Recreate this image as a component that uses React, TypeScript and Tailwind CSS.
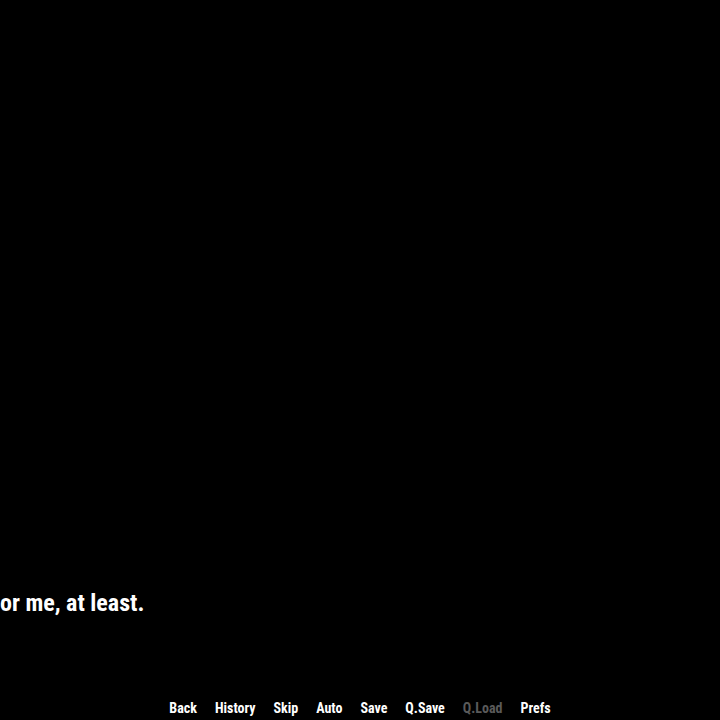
import React from "react";

const quickItems = [
  { label: "Back", enabled: true },
  { label: "History", enabled: true },
  { label: "Skip", enabled: true },
  { label: "Auto", enabled: true },
  { label: "Save", enabled: true },
  { label: "Q.Save", enabled: true },
  { label: "Q.Load", enabled: false },
  { label: "Prefs", enabled: true },
];

function QuickMenu() {
  return (
    <div className="flex justify-center items-end gap-[18px] pb-[3px]">
      {quickItems.map((item) => (
        <button
          key={item.label}
          className={
            item.enabled
              ? "text-[14px] leading-[18px] font-bold text-white"
              : "text-[14px] leading-[18px] font-bold text-[#5a5a5a]"
          }
        >
          {item.label}
        </button>
      ))}
    </div>
  );
}

export default function App() {
  return (
    <div
      className="w-[720px] h-[720px] bg-black overflow-hidden flex flex-col font-stretch-condensed"
      style={{ fontFamily: 'Roboto, "Roboto Condensed", sans-serif' }}
    >
      <div className="h-[587px]" />
      <p className="text-[24px] leading-[32px] font-bold text-white whitespace-nowrap">
        or me, at least.
      </p>
      <div className="grow" />
      <QuickMenu />
    </div>
  );
}
